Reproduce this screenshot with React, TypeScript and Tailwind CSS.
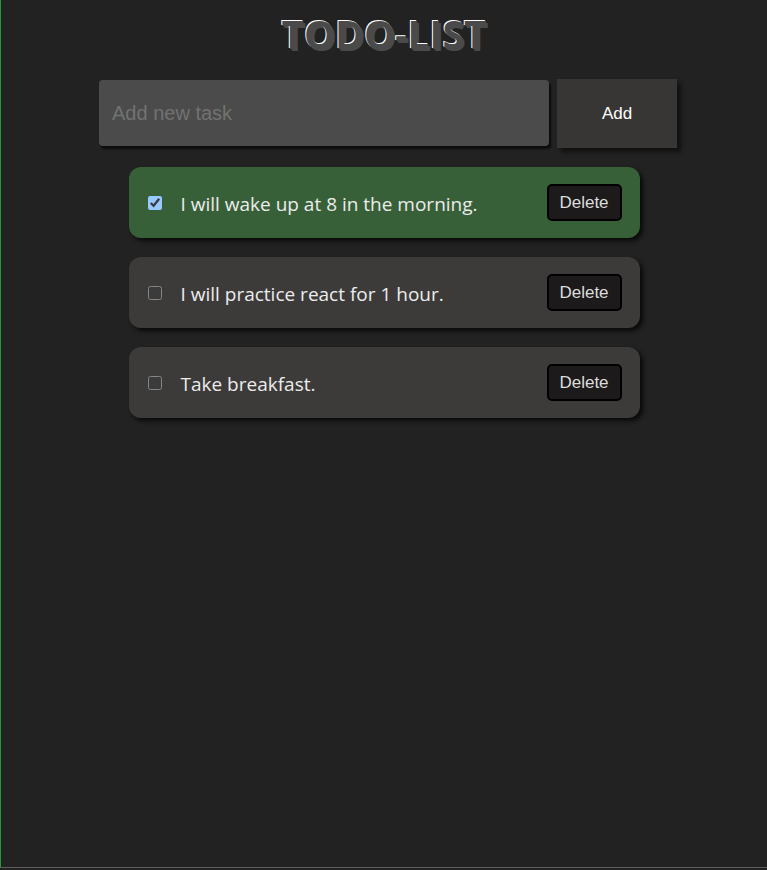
import { useState } from "react";

interface Todo {
  id: number;
  text: string;
  done: boolean;
}

const initialTodos: Todo[] = [
  { id: 1, text: "I will wake up at 8 in the morning.", done: true },
  { id: 2, text: "I will practice react for 1 hour.", done: false },
  { id: 3, text: "Take breakfast.", done: false },
];

export default function App() {
  const [todos, setTodos] = useState<Todo[]>(initialTodos);
  const [task, setTask] = useState("");

  const addTodo = () => {
    if (!task.trim()) return;
    setTodos([...todos, { id: Date.now(), text: task, done: false }]);
    setTask("");
  };

  const toggle = (id: number) =>
    setTodos(todos.map((t) => (t.id === id ? { ...t, done: !t.done } : t)));

  const remove = (id: number) => setTodos(todos.filter((t) => t.id !== id));

  return (
    <div className="h-[870px] bg-[#222222]">
      <div className="h-[868px] border-l border-b border-l-[#1f9a3c] border-b-[#5e5e5e] bg-[#222222] [color-scheme:dark]">
        {/* Header */}
        <h1
          className="pt-[7px] text-center font-['Open_Sans',sans-serif] text-[39px] font-bold leading-[53px] text-[#4a4a4a]"
          style={{ textShadow: "-1px -1px 0 #fff, 2px 2px 0 #4a4a4a" }}
        >
          TODO-LIST
        </h1>

        {/* Input row */}
        <div className="mt-[20px] flex items-start justify-center gap-2 pl-[8px]">
          <input
            value={task}
            onChange={(e) => setTask(e.target.value)}
            placeholder="Add new task"
            className="h-[66px] w-[450px] rounded-[4px] bg-[#4a4b4a] px-[13px] font-['Liberation_Sans',Arial,sans-serif] text-[20px] text-white shadow-[2px_3px_2px_#0c0c0c] outline-none placeholder:text-[#727272]"
          />
          <button
            onClick={addTodo}
            className="-mt-px h-[69px] w-[120px] bg-[#383634] font-['Liberation_Sans',Arial,sans-serif] text-[17px] text-white shadow-[4px_4px_4px_#111]"
          >
            Add
          </button>
        </div>

        {/* List */}
        <div className="mt-[19px] flex flex-col items-center gap-[19px]">
          {todos.map((todo) => (
            <div
              key={todo.id}
              className={`flex h-[71px] w-[511px] items-center rounded-[12px] pl-[19px] pr-[18px] shadow-[3px_3px_4px_#0a0a0a] ${
                todo.done ? "bg-[#386038]" : "bg-[#3c3b3a]"
              }`}
            >
              <input
                type="checkbox"
                checked={todo.done}
                onChange={() => toggle(todo.id)}
                className="m-0 h-[14px] w-[14px]"
              />
              <span className="ml-[19px] flex-1 pt-[3px] font-['Open_Sans',sans-serif] text-[19px] text-[#ececec]">
                {todo.text}
              </span>
              <button
                onClick={() => remove(todo.id)}
                className="h-[37px] w-[75px] rounded-[5px] border-2 border-black bg-[#1c1a1a] font-['Liberation_Sans',Arial,sans-serif] text-[17px] text-[#dddddd]"
              >
                Delete
              </button>
            </div>
          ))}
        </div>
      </div>
    </div>
  );
}
